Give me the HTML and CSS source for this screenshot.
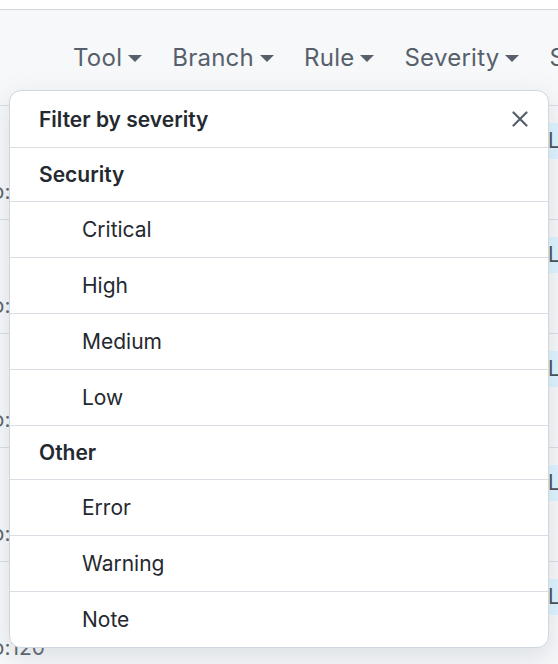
FILE: index.html
```html
<!DOCTYPE html>
<html lang="en">
<head>
<meta charset="utf-8">
<title>Filter by severity</title>
<link rel="stylesheet" href="styles.css">
</head>
<body>
<div class="topbar"></div>
<div class="filters">
  <span class="filter">Tool<i class="caret"></i></span>
  <span class="filter">Branch<i class="caret"></i></span>
  <span class="filter">Rule<i class="caret"></i></span>
  <span class="filter">Severity<i class="caret"></i></span>
  <span class="filter">Sort<i class="caret"></i></span>
</div>
<div class="table">
  <div class="row"><div class="row-top"><span class="label">Library</span></div><div class="loc">src/main.go:120</div></div>
  <div class="row"><div class="row-top"><span class="label">Library</span></div><div class="loc">src/main.go:120</div></div>
  <div class="row"><div class="row-top"><span class="label">Library</span></div><div class="loc">src/main.go:120</div></div>
  <div class="row"><div class="row-top"><span class="label">Library</span></div><div class="loc">src/main.go:120</div></div>
  <div class="row"><div class="row-top"><span class="label">Library</span></div><div class="loc">src/main.go:120</div></div>
</div>

<div class="menu">
  <div class="menu-title">
    <span>Filter by severity</span>
    <svg class="close" width="16" height="16" viewBox="0 0 16 16" aria-label="Close"><path d="M1.5 1.5L14.5 14.5M14.5 1.5L1.5 14.5" stroke="#57606a" stroke-width="2.2" stroke-linecap="round" fill="none"/></svg>
  </div>
  <div class="menu-section">Security</div>
  <div class="menu-item">Critical</div>
  <div class="menu-item">High</div>
  <div class="menu-item">Medium</div>
  <div class="menu-item">Low</div>
  <div class="menu-section">Other</div>
  <div class="menu-item">Error</div>
  <div class="menu-item">Warning</div>
  <div class="menu-item last">Note</div>
</div>
</body>
</html>
```
FILE: styles.css
```css
html, body {
  margin: 0;
  padding: 0;
}
body {
  background: #f6f8fa;
  font-family: Inter, "Noto Sans", "Liberation Sans", sans-serif;
  color: #24292f;
  overflow: hidden;
  width: 558px;
  height: 664px;
  position: relative;
}
.topbar {
  height: 9px;
  background: #ffffff;
  border-bottom: 1px solid #d0d7de;
}
.filters {
  height: 95px;
  display: flex;
  align-items: center;
  gap: 30px;
  padding-left: 73px;
  white-space: nowrap;
  font-size: 24px;
  letter-spacing: 0.25px;
  color: #57606a;
}
.filter {
  display: inline-flex;
  align-items: center;
}
.caret {
  display: inline-block;
  width: 0;
  height: 0;
  margin-left: 6px;
  margin-top: 2px;
  border-left: 7px solid transparent;
  border-right: 7px solid transparent;
  border-top: 7px solid #57606a;
}
.table {
  border-top: 1px solid #d8dee4;
}
.row {
  height: 113px;
  border-bottom: 1px solid #d8dee4;
  display: flex;
  flex-direction: column;
}
.row-top {
  padding-top: 17px;
  height: 36px;
  display: flex;
}
.label {
  margin-left: 538px;
  height: 36px;
  line-height: 36px;
  padding-left: 10px;
  padding-right: 12px;
  background: #ddf4ff;
  color: #424a53;
  font-size: 21px;
  white-space: nowrap;
}
.loc {
  margin-top: 18px;
  margin-left: -113px;
  font-size: 21px;
  line-height: 30px;
  color: #57606a;
  white-space: nowrap;
}
.menu {
  position: absolute;
  top: 90px;
  left: 9px;
  width: 540px;
  box-sizing: border-box;
  background: #ffffff;
  border: 1px solid #d0d7de;
  border-radius: 12px;
  box-shadow: 0 8px 24px rgba(140, 149, 159, 0.25);
  overflow: hidden;
}
.menu-title {
  height: 56px;
  display: flex;
  align-items: center;
  justify-content: space-between;
  padding-left: 29px;
  padding-right: 20px;
  font-size: 21px;
  font-weight: 600;
  border-bottom: 1px solid #d8dee4;
}
.close {
  display: block;
}
.menu-section {
  height: 53px;
  display: flex;
  align-items: center;
  padding-left: 29px;
  font-size: 21px;
  font-weight: 600;
  border-bottom: 1px solid #d8dee4;
}
.menu-item {
  height: 55px;
  display: flex;
  align-items: center;
  padding-left: 72px;
  font-size: 21px;
  font-weight: 400;
  border-bottom: 1px solid #d8dee4;
}
.menu-item.last {
  border-bottom: none;
}
```
